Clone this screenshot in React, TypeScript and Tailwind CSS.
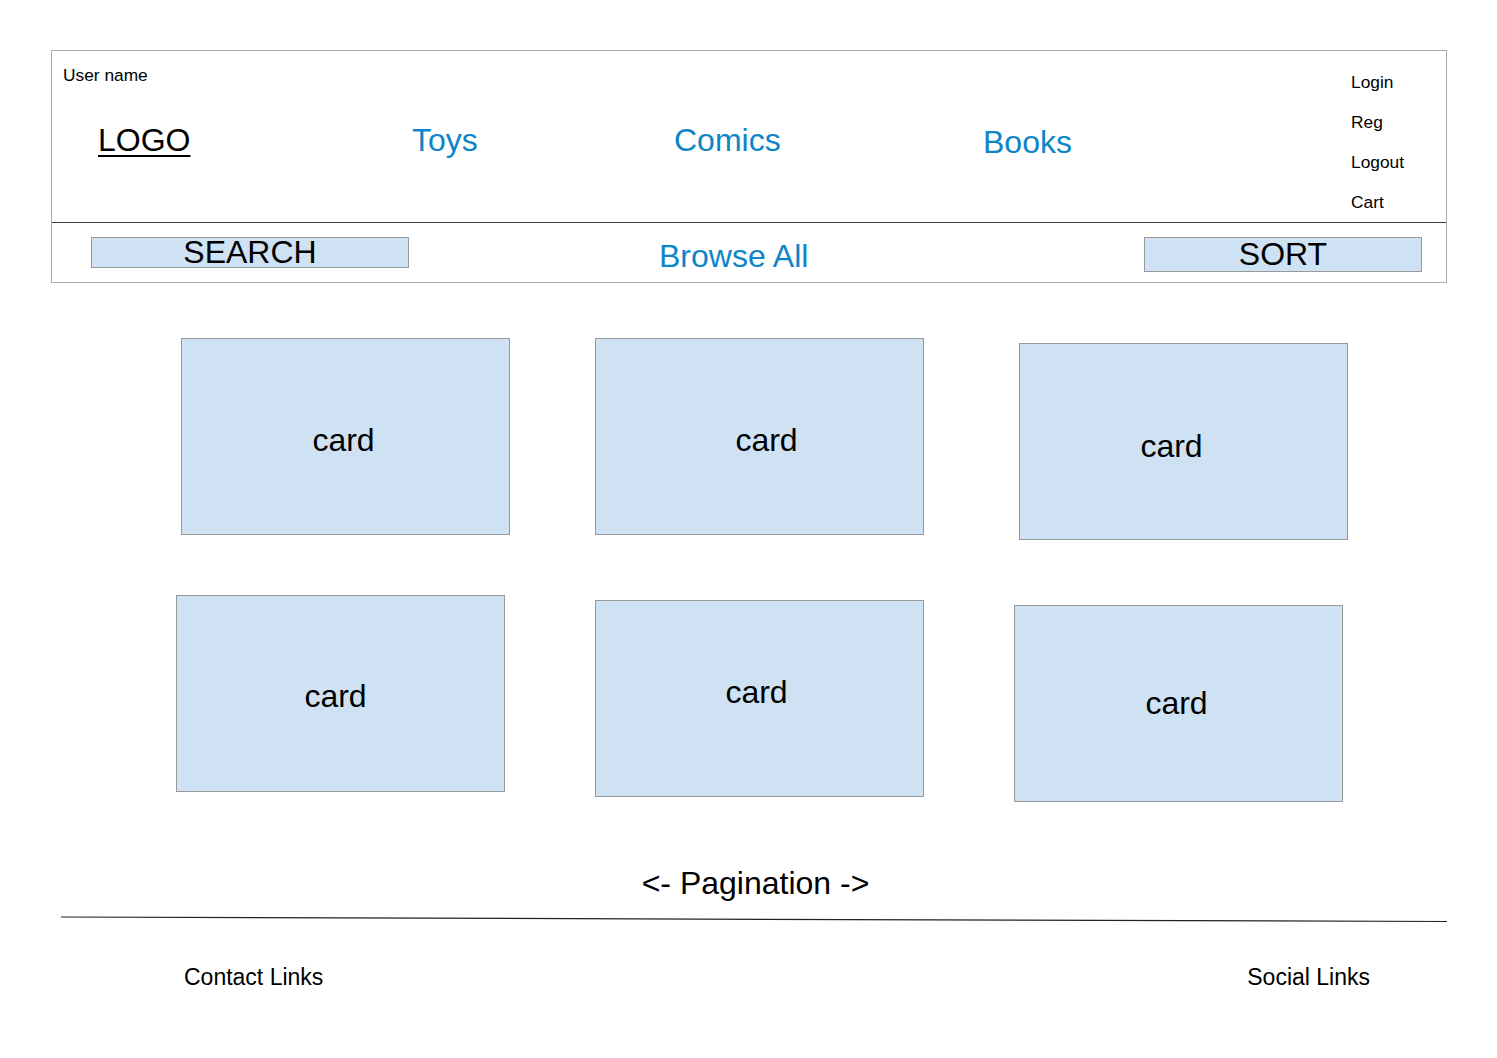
import React from "react";

const cardRows = [
  {
    rowClass: "mt-[55px]",
    cards: [
      { box: "ml-[181px]", text: "translate-x-[-2px] translate-y-[3px]" },
      { box: "ml-[85px]", text: "translate-x-[7px] translate-y-[3px]" },
      { box: "ml-[95px] mt-[5px]", text: "translate-x-[-12px] translate-y-[4px]" },
    ],
  },
  {
    rowClass: "mt-[55px]",
    cards: [
      { box: "ml-[176px]", text: "translate-x-[-5px] translate-y-[2px]" },
      { box: "ml-[90px] mt-[5px]", text: "translate-x-[-3px] translate-y-[-7px]" },
      { box: "ml-[90px] mt-[10px]", text: "translate-x-[-2px] translate-y-[-1px]" },
    ],
  },
];

export default function App() {
  return (
    <div className="w-[1497px] h-[1058px] bg-white pt-[50px] text-black font-['Liberation_Sans',Arial,sans-serif] overflow-hidden">
      {/* Header box */}
      <div className="ml-[51px] w-[1396px] h-[233px] border border-[#ababab] flex flex-col">
        {/* top section */}
        <div className="h-[172px] border-b border-[#3a3a3a] flex">
          <div className="flex-1 flex flex-col pl-[11px]">
            <div className="mt-[14px] text-[17.33px] leading-[20px]">User name</div>
            <div className="mt-[37px] flex items-start text-[32px] leading-[36px]">
              <div className="ml-[35px] w-[314px]">
                <span className="underline decoration-[2px] underline-offset-[4px]">LOGO</span>
              </div>
              <div className="w-[262px] text-[#0e85c8]">Toys</div>
              <div className="w-[309px] text-[#0e85c8]">Comics</div>
              <div className="mt-[2px] text-[#0e85c8]">Books</div>
            </div>
          </div>
          <div className="w-[95px] shrink-0 mt-[11px] flex flex-col text-[17.33px]">
            <div className="h-[40px] leading-[40px]">Login</div>
            <div className="h-[40px] leading-[40px]">Reg</div>
            <div className="h-[40px] leading-[40px]">Logout</div>
            <div className="h-[40px] leading-[40px]">Cart</div>
          </div>
        </div>
        {/* bottom section */}
        <div className="flex-1 flex items-start">
          <div className="ml-[39px] mt-[14px] w-[318px] h-[31px] bg-[#cfe2f3] border border-[#999999] flex items-center justify-center text-[32px] leading-[29px]">
            SEARCH
          </div>
          <div className="w-[735px] mt-[15px] pl-[250px] text-[32px] leading-[36px] text-[#0e85c8]">
            Browse All
          </div>
          <div className="mt-[14px] w-[278px] h-[35px] bg-[#cfe2f3] border border-[#999999] flex items-center justify-center text-[32px] leading-[33px]">
            SORT
          </div>
        </div>
      </div>

      {/* Cards */}
      {cardRows.map((row, ri) => (
        <div key={ri} className={`flex items-start ${row.rowClass}`}>
          {row.cards.map((c, ci) => (
            <div
              key={ci}
              className={`w-[329px] h-[197px] shrink-0 bg-[#cfe2f3] border border-[#999999] flex items-center justify-center ${c.box}`}
            >
              <span className={`text-[32px] leading-[36px] ${c.text}`}>card</span>
            </div>
          ))}
        </div>
      ))}

      {/* Pagination */}
      <div className="mt-[63px] flex justify-center pl-[14px] text-[32px] leading-[36px]">
        {"<- Pagination ->"}
      </div>

      {/* Footer line */}
      <div className="mt-[15px] ml-[61px] w-[1386px] h-[7px]">
        <svg width="1386" height="7" viewBox="0 0 1386 7">
          <line x1="0" y1="1" x2="1386" y2="5.5" stroke="#222222" strokeWidth="1.2" />
        </svg>
      </div>

      {/* Footer links */}
      <div className="mt-[40px] flex justify-between pl-[184px] pr-[127px] text-[23px] leading-[28px]">
        <span>Contact Links</span>
        <span>Social Links</span>
      </div>
    </div>
  );
}
